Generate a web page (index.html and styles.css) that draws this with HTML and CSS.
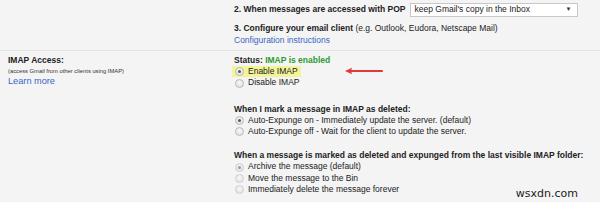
FILE: index.html
```html
<!DOCTYPE html>
<html>
<head>
<meta charset="utf-8">
<link rel="stylesheet" href="styles.css">
</head>
<body>
<div class="page">
  <section class="row pop">
    <div class="label"></div>
    <div class="content">
      <div class="pop-line">
        <b>2. When messages are accessed with POP</b>
        <span class="select">keep Gmail's copy in the Inbox<span class="caret">▼</span></span>
      </div>
      <div class="configure">
        <div><b>3. Configure your email client</b> (e.g. Outlook, Eudora, Netscape Mail)</div>
        <a class="link">Configuration instructions</a>
      </div>
    </div>
  </section>
  <section class="row imap">
    <div class="label">
      <div class="title">IMAP Access:</div>
      <div class="hint">(access Gmail from other clients using IMAP)</div>
      <a class="link">Learn more</a>
    </div>
    <div class="content">
      <div class="group">
        <div><b>Status: <span class="ok">IMAP is enabled</span></b></div>
        <div class="opt annotated"><span class="hl"><span class="radio on"></span>Enable IMAP</span>
          <svg class="arrow" width="40" height="8" viewBox="0 0 40 8"><path d="M6 4 H38" stroke="#e03a3a" stroke-width="2.2" stroke-linecap="round"/><path d="M1 4 L8 0.8 L7 4 L8 7.2 Z" fill="#e03a3a"/></svg>
        </div>
        <div class="opt"><span class="radio"></span>Disable IMAP</div>
      </div>
      <div class="group g2">
        <div><b>When I mark a message in IMAP as deleted:</b></div>
        <div class="opt"><span class="radio on"></span>Auto-Expunge on - Immediately update the server. (default)</div>
        <div class="opt"><span class="radio"></span>Auto-Expunge off - Wait for the client to update the server.</div>
      </div>
      <div class="group g3">
        <div><b>When a message is marked as deleted and expunged from the last visible IMAP folder:</b></div>
        <div class="opt dim"><span class="radio on"></span>Archive the message (default)</div>
        <div class="opt dim"><span class="radio"></span>Move the message to the Bin</div>
        <div class="opt dim"><span class="radio"></span>Immediately delete the message forever</div>
      </div>
    </div>
  </section>
  <div class="watermark">wsxdn.com</div>
</div>
</body>
</html>
```
FILE: styles.css
```css
html, body {
  margin: 0;
  padding: 0;
  background: #f4f4f4;
}
.page {
  position: relative;
  width: 600px;
  height: 202px;
  overflow: hidden;
  font-family: "Liberation Sans", Arial, sans-serif;
  font-size: 8.5px;
  line-height: 11.2px;
  color: #222;
}
b { font-weight: bold; color: #222; }
.row {
  display: grid;
  grid-template-columns: 234px 1fr;
}
.label { padding-left: 8px; }
.pop {
  height: 50px;
  border-bottom: 1px solid #e3e3e3;
}
.pop-line {
  display: flex;
  align-items: center;
  gap: 4px;
  height: 17px;
  padding-top: 1px;
}
.select {
  display: flex;
  align-items: center;
  justify-content: space-between;
  box-sizing: border-box;
  width: 168px;
  height: 14px;
  padding: 0 5px 0 4px;
  background: #fff;
  border: 1px solid #c8c8c8;
  color: #222;
}
.caret { font-size: 6px; color: #333; }
.configure { margin-top: 5px; line-height: 11.5px; }
.link { color: #3a66c4; display: block; }
.imap { padding-top: 4px; }
.imap .label .title { font-weight: bold; }
.hint { font-size: 5.8px; line-height: 9px; color: #333; margin-top: 1px; }
.imap .label .link { font-size: 9.2px; line-height: 11px; }
.g2 { margin-top: 15px; }
.g3 { margin-top: 13px; }
.ok { color: #2e9a33; }
.opt {
  display: flex;
  align-items: center;
}
.hl {
  display: inline-flex;
  align-items: center;
  background: #f3f39a;
  padding: 0 3px 0 2px;
  margin-left: -2px;
}
.radio {
  box-sizing: border-box;
  width: 9px;
  height: 9px;
  border-radius: 50%;
  border: 1px solid #b9b9b9;
  background: radial-gradient(circle at 50% 40%, #f8f8f8, #dcdcdc);
  margin: 0 4px 0 1px;
  position: relative;
}
.radio.on::after {
  content: "";
  position: absolute;
  left: 2px;
  top: 2px;
  width: 3px;
  height: 3px;
  border-radius: 50%;
  background: #555;
}
.dim .radio { border-color: #cfcfcf; }
.dim .radio.on::after { background: #999; }
.annotated { position: relative; }
.arrow {
  position: absolute;
  left: 110px;
  top: 1px;
}
.watermark {
  position: absolute;
  right: 22px;
  bottom: 3px;
  font-family: "DejaVu Sans", sans-serif;
  font-size: 11px;
  color: #222;
}
```
